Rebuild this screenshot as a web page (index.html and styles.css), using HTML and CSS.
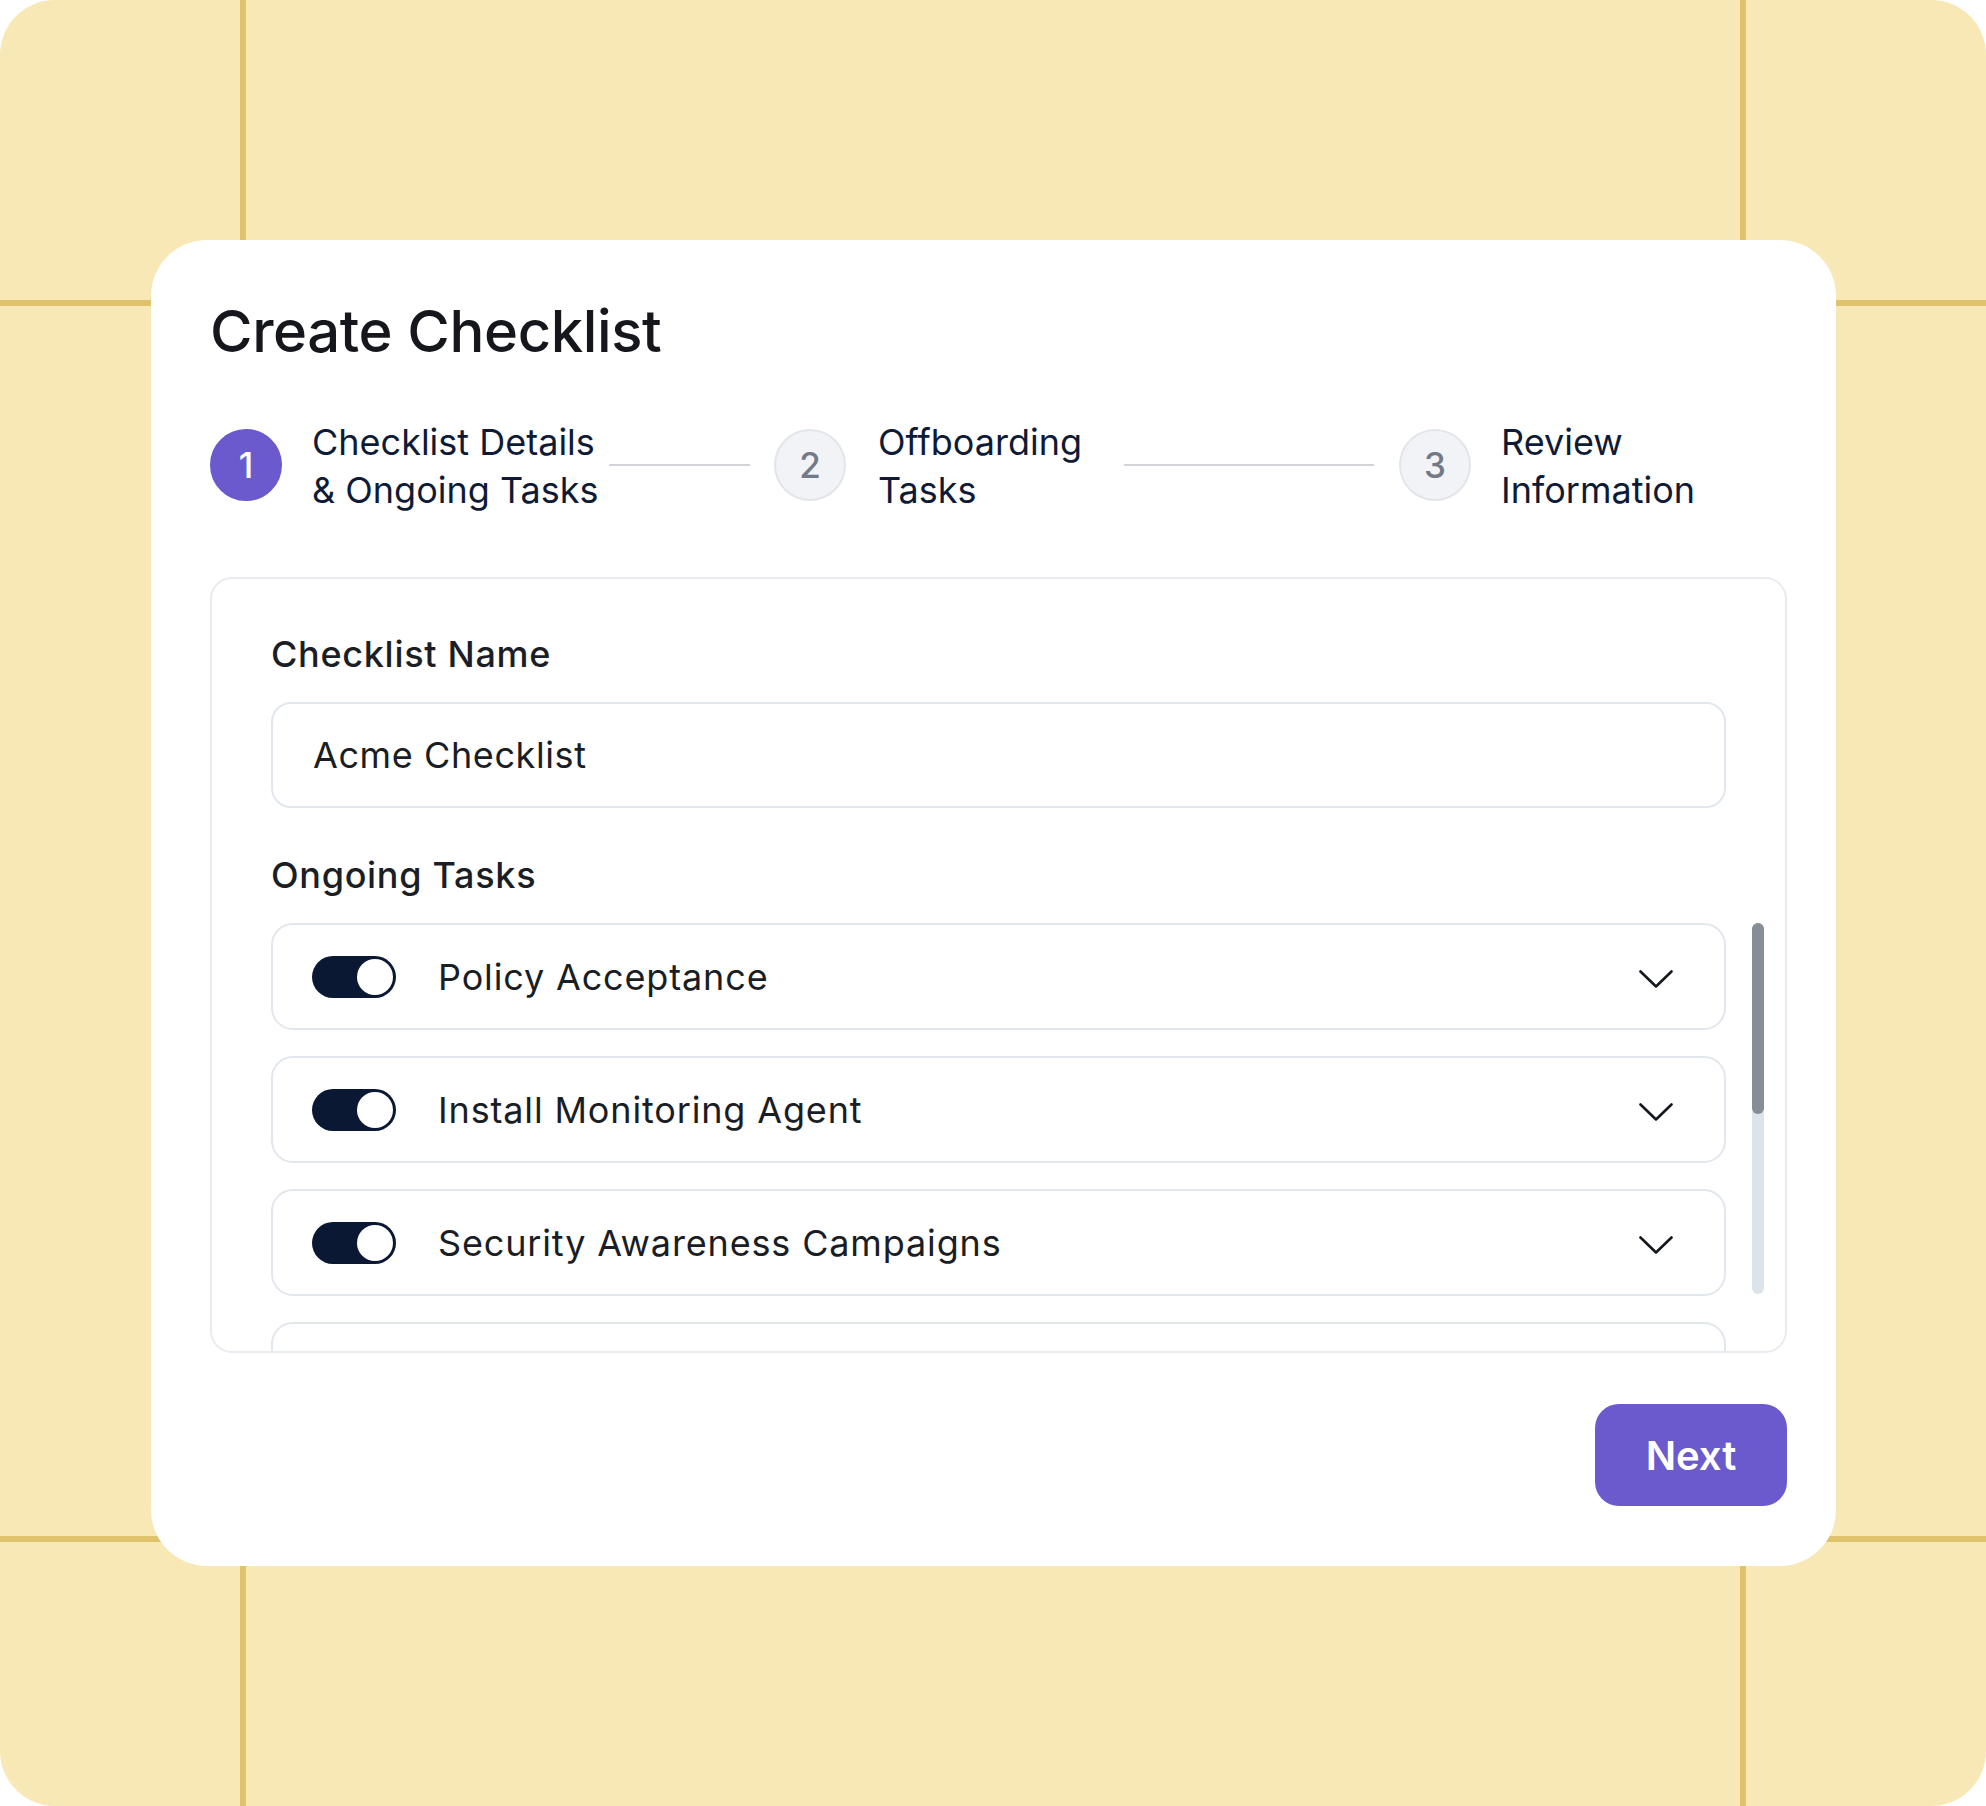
FILE: index.html
```html
<!DOCTYPE html>
<html lang="en">
<head>
<meta charset="utf-8">
<title>Create Checklist</title>
<link rel="stylesheet" href="styles.css">
</head>
<body>
<div class="frame">
  <div class="card">
    <h1 class="title">Create Checklist</h1>

    <div class="steps">
      <div class="step-num active">1</div>
      <div class="step-label label-1">Checklist Details<br>&amp; Ongoing Tasks</div>
      <div class="connector connector-1"></div>
      <div class="step-num">2</div>
      <div class="step-label label-2">Offboarding<br>Tasks</div>
      <div class="connector connector-2"></div>
      <div class="step-num">3</div>
      <div class="step-label label-3">Review<br>Information</div>
    </div>

    <div class="panel">
      <div class="field-label">Checklist Name</div>
      <div class="input">Acme Checklist</div>

      <div class="field-label tasks-label">Ongoing Tasks</div>
      <div class="tasks-wrap">
        <div class="task-list">
          <div class="task">
            <span class="toggle"><span class="knob"></span></span>
            <span class="task-name">Policy Acceptance</span>
            <svg class="chevron" viewBox="0 0 34 19" width="34" height="19"><path d="M1.5 1.5 L17 16.5 L32.5 1.5" fill="none" stroke="#15181e" stroke-width="2.6" stroke-linecap="round" stroke-linejoin="round"/></svg>
          </div>
          <div class="task">
            <span class="toggle"><span class="knob"></span></span>
            <span class="task-name">Install Monitoring Agent</span>
            <svg class="chevron" viewBox="0 0 34 19" width="34" height="19"><path d="M1.5 1.5 L17 16.5 L32.5 1.5" fill="none" stroke="#15181e" stroke-width="2.6" stroke-linecap="round" stroke-linejoin="round"/></svg>
          </div>
          <div class="task">
            <span class="toggle"><span class="knob"></span></span>
            <span class="task-name">Security Awareness Campaigns</span>
            <svg class="chevron" viewBox="0 0 34 19" width="34" height="19"><path d="M1.5 1.5 L17 16.5 L32.5 1.5" fill="none" stroke="#15181e" stroke-width="2.6" stroke-linecap="round" stroke-linejoin="round"/></svg>
          </div>
          <div class="task task-peek"></div>
        </div>
        <div class="scrollbar"><div class="thumb"></div></div>
      </div>
    </div>

    <div class="footer">
      <button class="next-btn" type="button">Next</button>
    </div>
  </div>
</div>
</body>
</html>
```

FILE: styles.css
```css
* { box-sizing: border-box; }

html, body {
  margin: 0;
  padding: 0;
  background: #ffffff;
}

body {
  font-family: "Inter", "Liberation Sans", sans-serif;
  color: #1a1d24;
}

.frame {
  width: 1986px;
  height: 1806px;
  border-radius: 55px;
  overflow: hidden;
  background-color: #f8e8b5;
  background-image:
    linear-gradient(#dfc26c, #dfc26c),
    linear-gradient(#dfc26c, #dfc26c),
    linear-gradient(#dfc26c, #dfc26c),
    linear-gradient(#dfc26c, #dfc26c);
  background-size: 6px 100%, 6px 100%, 100% 6px, 100% 6px;
  background-position: 240px 0, 1740px 0, 0 300px, 0 1536px;
  background-repeat: no-repeat;
  padding: 240px 0 0 151px;
}

.card {
  width: 1685px;
  height: 1326px;
  background: #ffffff;
  border-radius: 56px;
  padding: 56px 49px 0 59px;
}

.title {
  margin: 0;
  font-size: 58px;
  line-height: 70px;
  font-weight: 500;
  color: #15171c;
  letter-spacing: -0.4px;
}

/* Stepper */
.steps {
  margin-top: 51px;
  height: 96px;
  display: flex;
  align-items: center;
}

.step-num {
  flex: none;
  width: 72px;
  height: 72px;
  border-radius: 50%;
  background: #f1f3f6;
  border: 2px solid #e2e5ea;
  color: #737a86;
  font-size: 35px;
  font-weight: 500;
  display: flex;
  align-items: center;
  justify-content: center;
}

.step-num.active {
  background: #6a5acd;
  border-color: #6a5acd;
  color: #ffffff;
}

.step-label {
  flex: none;
  margin-left: 30px;
  margin-top: 2px;
  font-size: 36px;
  line-height: 48px;
  color: #0f1b36;
  white-space: nowrap;
}

.label-1 { width: 297px; }
.label-2 { width: 246px; margin-left: 32px; }
.label-3 { margin-left: 30px; }

.connector {
  flex: none;
  height: 2px;
  background: #d3d4d9;
}

.connector-1 { width: 141px; margin-right: 24px; }
.connector-2 { width: 250px; margin-right: 25px; }

/* Panel */
.panel {
  margin-top: 64px;
  height: 776px;
  border: 2px solid #e8ebf0;
  border-radius: 22px;
  overflow: hidden;
  padding: 55px 21px 0 59px;
}

.field-label {
  font-size: 36px;
  line-height: 40px;
  font-weight: 500;
  color: #1b1e24;
  letter-spacing: 0.7px;
}

.input {
  margin-top: 28px;
  margin-right: 38px;
  height: 106px;
  border: 2px solid #e2e7ee;
  border-radius: 20px;
  padding-left: 40px;
  display: flex;
  align-items: center;
  font-size: 36px;
  color: #1a1d24;
  letter-spacing: 0.6px;
}

.tasks-label {
  margin-top: 47px;
}

.tasks-wrap {
  margin-top: 28px;
  display: flex;
  align-items: flex-start;
}

.task-list {
  flex: 1;
  display: flex;
  flex-direction: column;
  gap: 26px;
}

.task {
  height: 107px;
  border: 2px solid #e2e7ee;
  border-radius: 22px;
  padding: 0 51px 0 39px;
  display: flex;
  align-items: center;
}

.toggle {
  flex: none;
  width: 84px;
  height: 42px;
  border-radius: 21px;
  background: #0a1833;
  display: flex;
  align-items: center;
  justify-content: flex-end;
  padding-right: 3px;
}

.knob {
  width: 36px;
  height: 36px;
  border-radius: 50%;
  background: #ffffff;
}

.task-name {
  margin-left: 42px;
  font-size: 36px;
  color: #1a1d24;
  letter-spacing: 0.85px;
}

.chevron {
  flex: none;
  margin-left: auto;
  margin-top: 5px;
}

.scrollbar {
  flex: none;
  margin-left: 26px;
  width: 12px;
  height: 371px;
  border-radius: 6px;
  background: #dde3ea;
}

.thumb {
  height: 191px;
  border-radius: 6px;
  background: #878d96;
}

/* Footer */
.footer {
  margin-top: 51px;
  display: flex;
  justify-content: flex-end;
}

.next-btn {
  width: 192px;
  height: 102px;
  border: none;
  border-radius: 24px;
  background: #6a5acd;
  color: #ffffff;
  font-family: "Inter", "Liberation Sans", sans-serif;
  font-size: 40px;
  font-weight: 600;
  cursor: pointer;
}
```
